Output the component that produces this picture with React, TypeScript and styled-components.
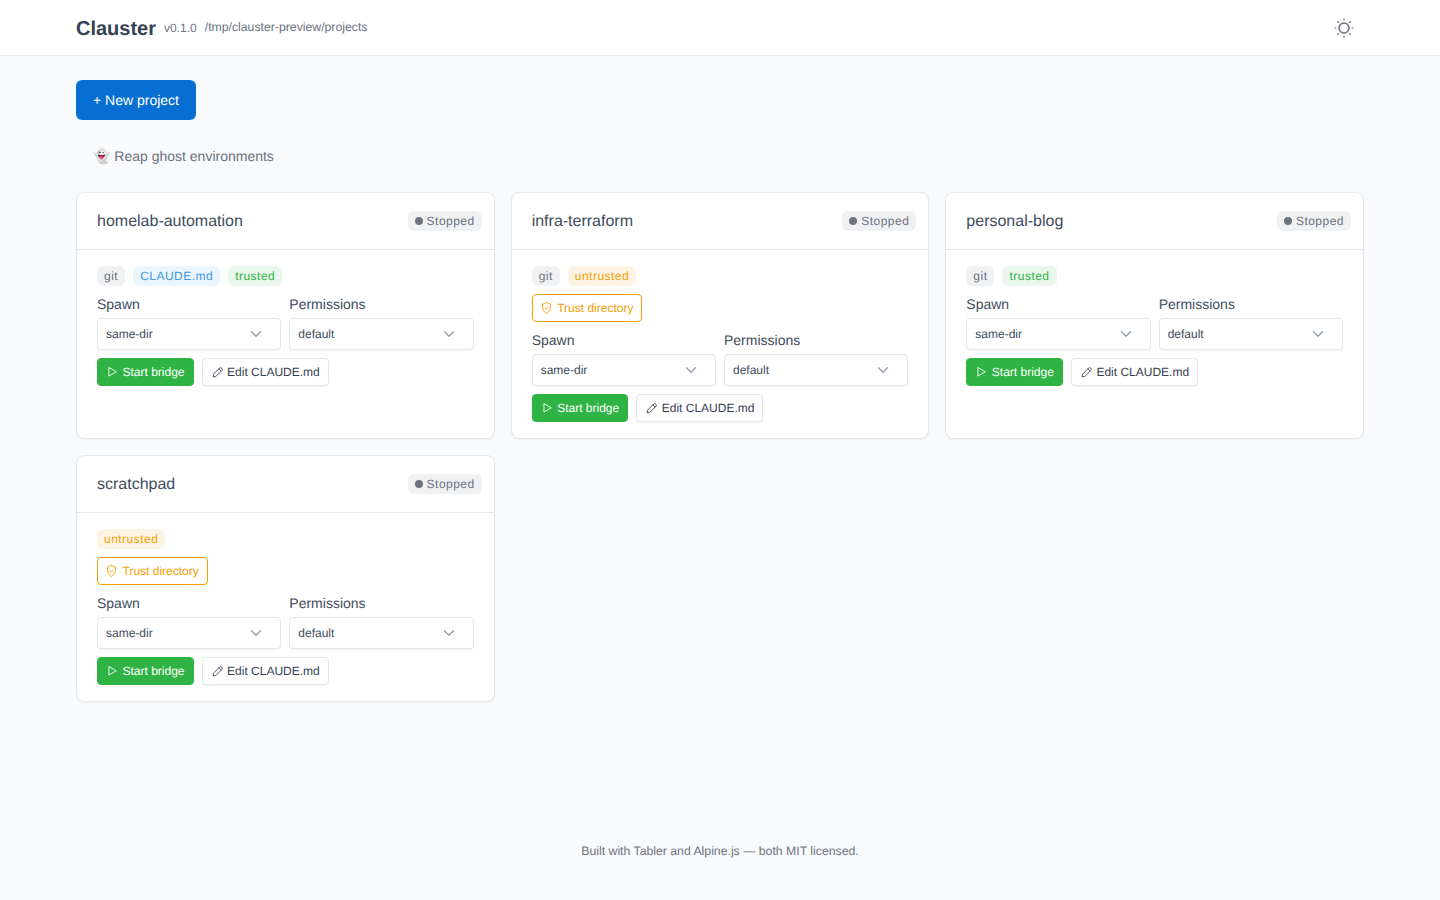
import styled, { createGlobalStyle } from "styled-components";

const GlobalStyle = createGlobalStyle`
  html, body {
    margin: 0;
    padding: 0;
  }
  body {
    background: #f9fafb;
    color: #374151;
    font-family: "Liberation Sans", Arial, sans-serif;
    font-size: 14px;
    line-height: 20px;
    text-rendering: geometricPrecision;
  }
  button, select {
    text-rendering: inherit;
  }
`;

type Project = {
  name: string;
  git?: boolean;
  claude?: boolean;
  trusted: boolean;
};

const projects: Project[] = [
  { name: "homelab-automation", git: true, claude: true, trusted: true },
  { name: "infra-terraform", git: true, trusted: false },
  { name: "personal-blog", git: true, trusted: true },
  { name: "scratchpad", trusted: false },
];

const SunIcon = () => (
  <svg width="24" height="24" viewBox="0 0 24 24" fill="none" stroke="currentColor" strokeWidth="1.25" strokeLinecap="round" strokeLinejoin="round">
    <circle cx="12" cy="12" r="5" strokeWidth="1.5" />
    <path d="M3 12h1m8 -9v1m8 8h1m-9 8v1m-6.4 -15.4l.7 .7m12.1 -.7l-.7 .7m0 11.4l.7 .7m-12.1 -.7l-.7 .7" />
  </svg>
);

const PlayIcon = () => (
  <svg width="14" height="14" viewBox="0 0 24 24" fill="none" stroke="currentColor" strokeWidth="1.5" strokeLinecap="round" strokeLinejoin="round">
    <path d="M5 5v14l12 -7z" />
  </svg>
);

const PencilIcon = () => (
  <svg width="14" height="14" viewBox="0 0 24 24" fill="none" stroke="currentColor" strokeWidth="1.5" strokeLinecap="round" strokeLinejoin="round">
    <path d="M4 20h4l10.5 -10.5a2.828 2.828 0 1 0 -4 -4l-10.5 10.5v4" />
    <path d="M13.5 6.5l4 4" />
  </svg>
);

const ShieldIcon = () => (
  <svg width="14" height="14" viewBox="0 0 24 24" fill="none" stroke="currentColor" strokeWidth="1.5" strokeLinecap="round" strokeLinejoin="round">
    <path d="M9.5 2.5C7.5 4 5 5 2.5 5C2 12 4 19 9.5 21.5C15 19 17 12 16.5 5C14 5 11.5 4 9.5 2.5z" />
    <path d="M6.5 12l2 2l4 -4" />
  </svg>
);

const chevron =
  "data:image/svg+xml,%3csvg xmlns='http://www.w3.org/2000/svg' viewBox='0 0 16 16'%3e%3cpath fill='none' stroke='%23929dab' stroke-linecap='round' stroke-linejoin='round' stroke-width='1.75' d='M2 5l6 6 6-6'/%3e%3c/svg%3e";

const Select = ({ value }: { value: string }) => (
  <SelectBox defaultValue={value}>
    <option>{value}</option>
  </SelectBox>
);

const ProjectCard = ({ project }: { project: Project }) => (
  <Card>
    <CardHeader>
      <CardTitle>{project.name}</CardTitle>
      <StatusBadge>
        <Dot />
        Stopped
      </StatusBadge>
    </CardHeader>
    <CardBody>
      <Badges>
        {project.git && <Badge $tone="gray">git</Badge>}
        {project.claude && <Badge $tone="blue">CLAUDE.md</Badge>}
        {project.trusted ? <Badge $tone="green">trusted</Badge> : <Badge $tone="orange">untrusted</Badge>}
      </Badges>
      {!project.trusted && (
        <TrustRow>
          <TrustButton>
            <ShieldIcon />
            Trust directory
          </TrustButton>
        </TrustRow>
      )}
      <Fields>
        <Field>
          <Label>Spawn</Label>
          <Select value="same-dir" />
        </Field>
        <Field>
          <Label>Permissions</Label>
          <Select value="default" />
        </Field>
      </Fields>
      <Actions>
        <StartButton>
          <PlayIcon />
          Start bridge
        </StartButton>
        <EditButton>
          <PencilIcon />
          Edit CLAUDE.md
        </EditButton>
      </Actions>
    </CardBody>
  </Card>
);

export default function App() {
  return (
    <Page>
      <GlobalStyle />
      <Header>
        <Brand>
          <Logo>Clauster</Logo>
          <Meta>v0.1.0</Meta>
          <Path>/tmp/clauster-preview/projects</Path>
        </Brand>
        <ThemeToggle aria-label="Toggle theme">
          <SunIcon />
        </ThemeToggle>
      </Header>
      <Main>
        <PrimaryButton>+ New project</PrimaryButton>
        <GhostRow>
          <GhostButton>👻 Reap ghost environments</GhostButton>
        </GhostRow>
        <Grid>
          {projects.map((p) => (
            <ProjectCard key={p.name} project={p} />
          ))}
        </Grid>
      </Main>
      <Footer>Built with Tabler and Alpine.js — both MIT licensed.</Footer>
    </Page>
  );
}

const Page = styled.div`
  min-height: 900px;
  display: flex;
  flex-direction: column;
`;

const Header = styled.header`
  height: 55px;
  background: #ffffff;
  border-bottom: 1px solid #e5e7eb;
  padding: 0 76px;
  display: flex;
  align-items: center;
  justify-content: space-between;
`;

const Brand = styled.div`
  display: flex;
  align-items: center;
  gap: 8px;
`;

const Logo = styled.span`
  font-size: 20px;
  line-height: 24px;
  padding-top: 2px;
  font-weight: 700;
  color: #374151;
`;

const Meta = styled.span`
  font-size: 12px;
  color: #6b7280;
`;

const Path = styled.span`
  font-size: 12.25px;
  color: #6b7280;
  margin-bottom: 2px;
`;

const ThemeToggle = styled.button`
  width: 40px;
  height: 40px;
  display: flex;
  align-items: center;
  justify-content: center;
  background: none;
  border: none;
  padding: 0;
  color: #6b7280;
`;

const Main = styled.main`
  flex: 1;
  padding: 24px 76px 0;
`;

const PrimaryButton = styled.button`
  display: block;
  height: 40px;
  padding: 0 17px;
  font: 14px/20px "Liberation Sans", Arial, sans-serif;
  color: #ffffff;
  background: #066fd1;
  border: none;
  border-radius: 6px;
`;

const GhostRow = styled.div`
  margin-top: 16px;
`;

const GhostButton = styled.button`
  display: block;
  height: 40px;
  padding: 0 17px;
  font: 14px/20px "Liberation Sans", Arial, sans-serif;
  color: #6b7280;
  background: none;
  border: none;
`;

const Grid = styled.div`
  margin-top: 16px;
  display: grid;
  grid-template-columns: repeat(3, 1fr);
  gap: 16px;
`;

const Card = styled.section`
  height: 247px;
  box-sizing: border-box;
  background: #ffffff;
  border: 1px solid #e5e7eb;
  border-radius: 8px;
  box-shadow: 0 1px 2px rgba(24, 36, 51, 0.04);
`;

const CardHeader = styled.div`
  height: 57px;
  box-sizing: border-box;
  border-bottom: 1px solid #e5e7eb;
  padding: 0 12px 0 20px;
  display: flex;
  align-items: center;
  justify-content: space-between;
`;

const CardTitle = styled.h3`
  margin: 0;
  padding-top: 2px;
  font-size: 16px;
  line-height: 24px;
  font-weight: 400;
  color: #414c5c;
`;

const StatusBadge = styled.span`
  display: inline-flex;
  align-items: center;
  gap: 4px;
  height: 20px;
  padding: 0 7px;
  border-radius: 6px;
  background: #f0f1f3;
  color: #6b7280;
  font-size: 12px;
  letter-spacing: 0.48px;
`;

const Dot = styled.span`
  width: 8px;
  height: 8px;
  border-radius: 50%;
  background: #6b7280;
`;

const CardBody = styled.div`
  padding: 16px 20px;
`;

const Badges = styled.div`
  display: flex;
  gap: 8px;
`;

const toneColors = {
  gray: ["#f0f1f3", "#6b7280"],
  blue: ["#ebf5fd", "#4299e1"],
  green: ["#eaf7ec", "#2fb344"],
  orange: ["#fef4e6", "#f59f00"],
};

const Badge = styled.span<{ $tone: keyof typeof toneColors }>`
  height: 20px;
  padding: 0 7px;
  border-radius: 6px;
  font-size: 12px;
  letter-spacing: 0.48px;
  background: ${(p) => toneColors[p.$tone][0]};
  color: ${(p) => toneColors[p.$tone][1]};
`;

const TrustRow = styled.div`
  margin-top: 8px;
`;

const SmallButton = styled.button`
  display: inline-flex;
  align-items: center;
  gap: 2.5px;
  height: 28px;
  box-sizing: border-box;
  padding: 0 8px;
  font: 12px/16px "Liberation Sans", Arial, sans-serif;
  border-radius: 4px;
  background: #ffffff;
`;

const TrustButton = styled(SmallButton)`
  color: #f59f00;
  border: 1px solid #f59f00;
`;

const Fields = styled.div`
  margin-top: 8px;
  display: grid;
  grid-template-columns: 1fr 1fr;
  gap: 8px;
`;

const Field = styled.div`
  min-width: 0;
`;

const Label = styled.label`
  display: block;
  font-size: 14px;
  line-height: 20px;
  margin-bottom: 4px;
  color: #414c5c;
`;

const SelectBox = styled.select`
  display: block;
  width: 100%;
  height: 32px;
  box-sizing: border-box;
  padding: 0 32px 0 8px;
  font: 12px/16px "Liberation Sans", Arial, sans-serif;
  color: #414c5c;
  appearance: none;
  background: #ffffff url("${chevron}") no-repeat right 18px center / 12px 12px;
  border: 1px solid #e5e7eb;
  border-radius: 4px;
  box-shadow: 0 1px 1px rgba(24, 36, 51, 0.06);
`;

const Actions = styled.div`
  margin-top: 8px;
  display: flex;
  gap: 8px;
`;

const StartButton = styled(SmallButton)`
  color: #ffffff;
  background: #2fb344;
  border: 1px solid #2fb344;
`;

const EditButton = styled(SmallButton)`
  color: #374151;
  border: 1px solid #e5e7eb;
  box-shadow: 0 1px 1px rgba(24, 36, 51, 0.06);
`;

const Footer = styled.footer`
  height: 98px;
  box-sizing: border-box;
  padding-top: 41px;
  text-align: center;
  font-size: 12.25px;
  line-height: 16px;
  color: #6b7280;
`;
